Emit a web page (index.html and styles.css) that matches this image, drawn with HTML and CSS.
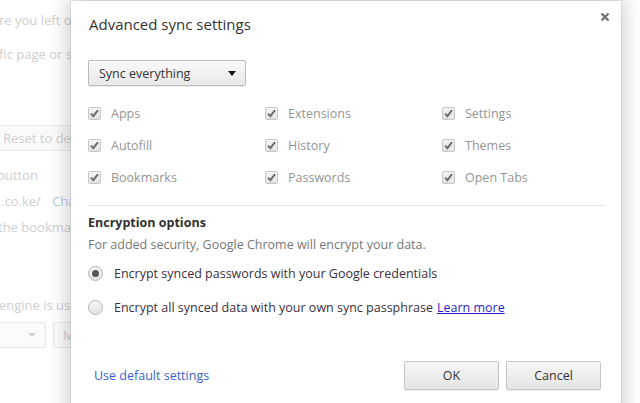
FILE: index.html
```html
<!DOCTYPE html>
<html>
<head>
<meta charset="utf-8">
<link rel="stylesheet" href="styles.css">
</head>
<body>
<div class="page">
  <div class="bg-line l1">re you left off</div>
  <div class="bg-line l2">fic page or set of pages</div>
  <div class="bg-btn">Reset to default</div>
  <div class="bg-line l3">button</div>
  <div class="bg-line l4">.co.ke/ <span class="bg-link">Change</span></div>
  <div class="bg-line l5">the bookmarks bar</div>
  <div class="bg-line l6">engine is used</div>
  <div class="bg-controls">
    <div class="bg-select"><span class="bg-tri"></span></div>
    <div class="bg-btn2">Manage</div>
  </div>
</div>

<div class="dialog">
  <div class="close">
    <svg width="10" height="10" viewBox="0 0 10 10"><path d="M1.5 1.5 L8.5 8.5 M8.5 1.5 L1.5 8.5" stroke="#6f6f6f" stroke-width="2.2" fill="none"/></svg>
  </div>
  <h1 class="title">Advanced sync settings</h1>
  <div class="select">
    <span>Sync everything</span>
    <span class="tri"></span>
  </div>
  <div class="grid">
    <label class="cb"><span class="box"><svg viewBox="0 0 13 13" width="13" height="13"><path d="M3 6.6 L5.4 9.2 L10 3.2" stroke="#6e6e6e" stroke-width="2" fill="none"/></svg></span>Apps</label>
    <label class="cb"><span class="box"><svg viewBox="0 0 13 13" width="13" height="13"><path d="M3 6.6 L5.4 9.2 L10 3.2" stroke="#6e6e6e" stroke-width="2" fill="none"/></svg></span>Extensions</label>
    <label class="cb"><span class="box"><svg viewBox="0 0 13 13" width="13" height="13"><path d="M3 6.6 L5.4 9.2 L10 3.2" stroke="#6e6e6e" stroke-width="2" fill="none"/></svg></span>Settings</label>
    <label class="cb"><span class="box"><svg viewBox="0 0 13 13" width="13" height="13"><path d="M3 6.6 L5.4 9.2 L10 3.2" stroke="#6e6e6e" stroke-width="2" fill="none"/></svg></span>Autofill</label>
    <label class="cb"><span class="box"><svg viewBox="0 0 13 13" width="13" height="13"><path d="M3 6.6 L5.4 9.2 L10 3.2" stroke="#6e6e6e" stroke-width="2" fill="none"/></svg></span>History</label>
    <label class="cb"><span class="box"><svg viewBox="0 0 13 13" width="13" height="13"><path d="M3 6.6 L5.4 9.2 L10 3.2" stroke="#6e6e6e" stroke-width="2" fill="none"/></svg></span>Themes</label>
    <label class="cb"><span class="box"><svg viewBox="0 0 13 13" width="13" height="13"><path d="M3 6.6 L5.4 9.2 L10 3.2" stroke="#6e6e6e" stroke-width="2" fill="none"/></svg></span>Bookmarks</label>
    <label class="cb"><span class="box"><svg viewBox="0 0 13 13" width="13" height="13"><path d="M3 6.6 L5.4 9.2 L10 3.2" stroke="#6e6e6e" stroke-width="2" fill="none"/></svg></span>Passwords</label>
    <label class="cb"><span class="box"><svg viewBox="0 0 13 13" width="13" height="13"><path d="M3 6.6 L5.4 9.2 L10 3.2" stroke="#6e6e6e" stroke-width="2" fill="none"/></svg></span>Open Tabs</label>
  </div>
  <div class="sep"></div>
  <h2 class="sect">Encryption options</h2>
  <p class="desc">For added security, Google Chrome will encrypt your data.</p>
  <label class="radio r1"><span class="circle on"></span>Encrypt synced passwords with your Google credentials</label>
  <label class="radio r2"><span class="circle"></span>Encrypt all synced data with your own sync passphrase <a class="learn" href="#">Learn more</a></label>
  <div class="footer">
    <a class="defaults" href="#">Use default settings</a>
    <div class="buttons">
      <button class="btn">OK</button>
      <button class="btn">Cancel</button>
    </div>
  </div>
</div>
</body>
</html>
```

FILE: styles.css
```css
html, body {
  margin: 0;
  padding: 0;
  width: 640px;
  height: 403px;
  overflow: hidden;
  background: #ffffff;
  font-family: "Open Sans", "Noto Sans", sans-serif;
}

.page {
  position: relative;
  height: 403px;
  color: #cfcfcf;
  font-size: 13px;
  padding-top: 10px;
  box-sizing: border-box;
}

.bg-line {
  height: 20px;
  line-height: 20px;
  white-space: nowrap;
}
.l1 { margin-left: -1px; }
.l2 { margin-top: 14px; margin-left: -1px; }
.bg-btn {
  margin-top: 61px;
  margin-left: -10px;
  width: 120px;
  height: 24px;
  line-height: 24px;
  border: 1px solid #ececec;
  border-radius: 2px;
  padding-left: 12px;
  background: #fafafa;
  white-space: nowrap;
}
.l3 { margin-top: 14px; margin-left: -3px; }
.l4 { margin-top: 6px; margin-left: 1px; }
.bg-link { color: #bccbec; margin-left: 8px; }
.l5 { margin-top: 6px; margin-left: -2px; }
.l6 { margin-top: 58px; margin-left: -1px; }

.bg-controls {
  margin-top: 7px;
  display: flex;
  gap: 7px;
  margin-left: -10px;
}
.bg-select {
  width: 54px;
  height: 24px;
  border: 1px solid #e8e8e8;
  border-radius: 2px;
  background: #fbfbfb;
  position: relative;
}
.bg-tri {
  position: absolute;
  right: 9px;
  top: 10px;
  border-left: 4px solid transparent;
  border-right: 4px solid transparent;
  border-top: 4px solid #cfcfcf;
}
.bg-btn2 {
  width: 60px;
  height: 24px;
  line-height: 24px;
  border: 1px solid #e8e8e8;
  border-radius: 2px;
  background: #fbfbfb;
  padding-left: 9px;
}

.dialog {
  position: absolute;
  left: 71px;
  top: 1px;
  width: 550px;
  height: 420px;
  background: #fff;
  box-shadow: 0 0 20px 2px rgba(0,0,0,0.22), 0 0 0 1px rgba(0,0,0,0.06);
  box-sizing: border-box;
  padding: 13px 16px 0 17px;
  color: #333;
  font-size: 12.5px;
}

.close {
  position: absolute;
  right: 11px;
  top: 11px;
  width: 10px;
  height: 10px;
}
.close svg { display: block; }

.title {
  margin: 0;
  font-weight: normal;
  font-size: 15px;
  line-height: 20px;
  color: #333;
  padding-left: 1px;
}

.select {
  margin-top: 26px;
  width: 158px;
  height: 26px;
  box-sizing: border-box;
  border: 1px solid #b9b9b9;
  border-radius: 2px;
  background: linear-gradient(#f9f9f9, #e9e9e9);
  display: flex;
  align-items: center;
  justify-content: space-between;
  padding: 0 9px 0 10px;
  color: #333;
  box-shadow: 0 1px 0 rgba(0,0,0,0.06);
}
.tri {
  border-left: 4.5px solid transparent;
  border-right: 4.5px solid transparent;
  border-top: 5px solid #111;
}

.grid {
  margin-top: 11px;
  display: grid;
  grid-template-columns: 177px 177px 177px;
  grid-auto-rows: 32px;
}
.cb {
  display: flex;
  align-items: center;
  gap: 10px;
  color: #959595;
}
.box {
  width: 13px;
  height: 13px;
  box-sizing: border-box;
  border: 1px solid #c6c6c6;
  border-radius: 2px;
  background: linear-gradient(#f4f4f4, #e4e4e4);
  position: relative;
  flex: none;
}
.box svg {
  position: absolute;
  left: -1px;
  top: -1px;
}

.sep {
  margin-top: 12px;
  height: 1px;
  background: #e2e2e2;
  width: 517px;
}

.sect {
  margin: 8px 0 0;
  font-size: 12.5px;
  font-weight: bold;
  line-height: 18px;
  color: #303030;
}
.desc {
  margin: 4px 0 0;
  line-height: 18px;
  color: #777;
}

.radio {
  display: flex;
  align-items: center;
  height: 24px;
  color: #3a3040;
  white-space: nowrap;
}
.r1 { margin-top: 7px; }
.r2 { margin-top: 10px; }
.circle {
  width: 15px;
  height: 15px;
  box-sizing: border-box;
  border: 1px solid #b4b4b4;
  border-radius: 50%;
  background: linear-gradient(#f6f6f6, #e2e2e2);
  margin-right: 11px;
  position: relative;
  flex: none;
}
.circle.on::after {
  content: "";
  position: absolute;
  left: 3px;
  top: 3px;
  width: 7px;
  height: 7px;
  border-radius: 50%;
  background: #555;
}
.learn {
  color: #2a1fd0;
  text-decoration: underline;
  margin-left: 4px;
}

.footer {
  margin-top: 42px;
  display: flex;
  align-items: center;
  justify-content: space-between;
  width: 513px;
}
.defaults {
  color: #3a62d2;
  text-decoration: none;
  margin-left: 6px;
}
.buttons {
  display: flex;
  gap: 7px;
}
.btn {
  width: 95px;
  height: 29px;
  border: 1px solid #c4c4c4;
  border-radius: 2px;
  background: linear-gradient(#f6f6f6, #e5e5e5);
  font-family: inherit;
  font-size: 12.5px;
  color: #333;
  padding: 0;
  box-shadow: 0 1px 0 rgba(0,0,0,0.05);
}
```
